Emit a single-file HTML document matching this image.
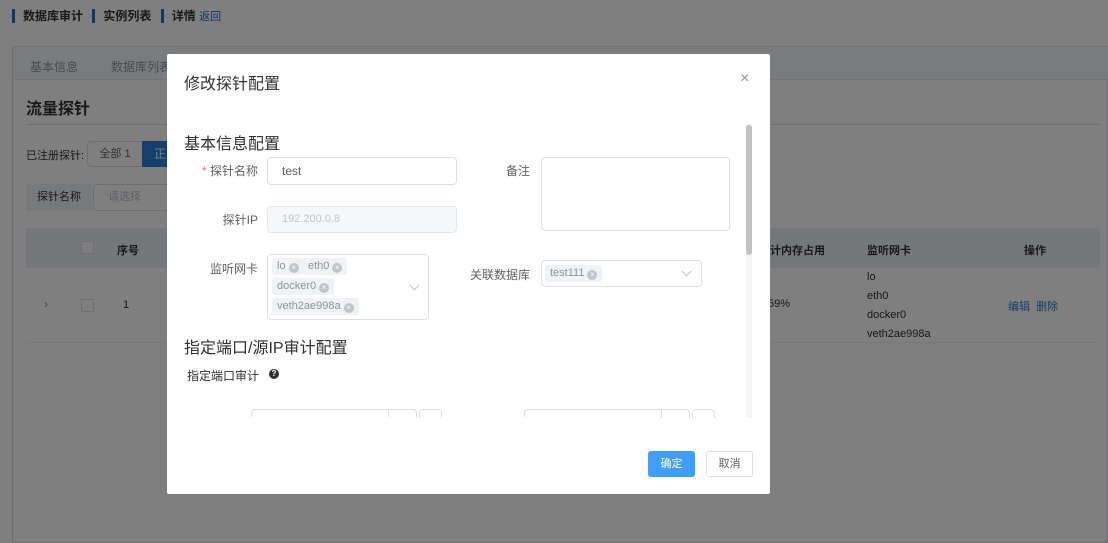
<!DOCTYPE html>
<html><head><meta charset="utf-8"><style>
*{box-sizing:border-box;margin:0;padding:0}
body{width:1108px;height:543px;overflow:hidden;background:#fff;font-family:"Liberation Sans","Noto Sans CJK SC",sans-serif;position:relative;color:#606266;font-size:12px}
.a{position:absolute}
.ov{position:absolute;left:0;top:0;width:1108px;height:543px;background:rgba(0,0,0,.5)}
.inp{position:absolute;border:1px solid #dcdfe6;border-radius:4px;background:#fff}
.tag{position:absolute;background:#f0f2f5;color:#909399;height:17px;line-height:17px;padding:0 5px;border-radius:3px;font-size:11px;white-space:nowrap}
.tag i{display:inline-block;width:10px;height:10px;border-radius:50%;background:#c0c4cc;color:#fff;font-style:normal;font-size:8px;line-height:10px;text-align:center;margin-left:3px;vertical-align:-1px}
.lab{position:absolute;font-size:12px;color:#606266;text-align:right}
.chev{position:absolute;width:7px;height:7px;border-right:1px solid #c0c4cc;border-bottom:1px solid #c0c4cc;transform:rotate(45deg)}
</style></head><body>
<div class="a" style="left:12px;top:7px;font-size:12px;font-weight:bold;color:#303133">
<span style="border-left:3px solid #1f6fd0;padding-left:8px">数据库审计</span>
<span style="border-left:3px solid #1f6fd0;padding-left:8px;margin-left:6px">实例列表</span>
<span style="border-left:3px solid #1f6fd0;padding-left:8px;margin-left:6px">详情</span>
<span style="color:#1f6fd0;font-weight:normal;font-size:11px">返回</span></div>
<div class="a" style="left:12px;top:46px;width:1096px;height:497px;border:1px solid #dcdfe6;background:#fff"></div>
<div class="a" style="left:13px;top:47px;width:1095px;height:33px;background:#f5f7fa;border-bottom:1px solid #e4e7ed"></div>
<div class="a" style="left:30px;top:58px;color:#909399">基本信息</div>
<div class="a" style="left:111px;top:58px;color:#909399">数据库列表</div>
<div class="a" style="left:26px;top:95px;font-size:16px;font-weight:bold;color:#303133">流量探针</div>
<div class="a" style="left:26px;top:124px;width:1074px;height:1px;background:#dcdfe6"></div>
<div class="a" style="left:26px;top:147px;font-size:11px;color:#303133">已注册探针:</div>
<div class="a" style="left:87px;top:141px;width:56px;height:26px;border:1px solid #dcdfe6;border-radius:4px 0 0 4px;text-align:center;line-height:24px;font-size:11px">全部 1</div>
<div class="a" style="left:142px;top:141px;width:40px;height:26px;background:#2a7fd8;color:#fff;line-height:26px;padding-left:12px">正常</div>
<div class="a" style="left:26px;top:184px;width:66px;height:27px;background:#f0f2f5;line-height:27px;text-align:center;font-size:11px;color:#303133">探针名称</div>
<div class="a" style="left:93px;top:184px;width:100px;height:27px;border:1px solid #dcdfe6;border-radius:4px;line-height:25px;padding-left:14px;color:#c0c4cc;font-size:11px">请选择</div>
<div class="a" style="left:26px;top:228px;width:1074px;height:40px;background:#ebeef5"></div>
<div class="a" style="left:26px;top:268px;width:1074px;height:75px;border-bottom:1px solid #ebeef5"></div>
<div class="a" style="left:81px;top:241px;width:13px;height:13px;border:1px solid #dcdfe6;background:#fff;border-radius:2px"></div>
<div class="a" style="left:81px;top:299px;width:13px;height:13px;border:1px solid #dcdfe6;background:#fff;border-radius:2px"></div>
<div class="a" style="left:117px;top:242px;font-weight:bold;color:#303133;font-size:11px">序号</div>
<div class="a" style="left:123px;top:299px;font-size:11px;color:#303133">1</div>
<div class="a" style="left:44px;top:297px;color:#909399">›</div>
<div class="a" style="left:770px;top:242px;font-weight:bold;color:#303133;font-size:11px">计内存占用</div>
<div class="a" style="left:867px;top:242px;font-weight:bold;color:#303133;font-size:11px">监听网卡</div>
<div class="a" style="left:1024px;top:242px;font-weight:bold;color:#303133;font-size:11px">操作</div>
<div class="a" style="left:768px;top:298px;font-size:11px;color:#303133">59%</div>
<div class="a" style="left:867px;top:268px;font-size:11px;color:#303133;line-height:19px">lo<br>eth0<br>docker0<br>veth2ae998a</div>
<div class="a" style="left:1008px;top:298px;font-size:11px;color:#2a7fd8">编辑 &nbsp;删除</div>
<div class="ov"></div>
<div class="a" style="left:167px;top:54px;width:603px;height:440px;background:#fff;border-radius:2px">
<div class="a" style="left:17px;top:16px;font-size:16px;color:#303133">修改探针配置</div>
<div class="a" style="left:573px;top:16px;font-size:16px;color:#909399">×</div>
<div class="a" style="left:579px;top:70px;width:6px;height:294px;background:#f5f5f5"></div>
<div class="a" style="left:579px;top:71px;width:6px;height:130px;background:#c1c1c1;border-radius:3px"></div>
<div class="a" style="left:17px;top:76px;font-size:16px;color:#303133">基本信息配置</div>
<div class="lab" style="left:20px;top:108px;width:71px"><span style="color:#f56c6c">* </span>探针名称</div>
<div class="inp" style="left:100px;top:103px;width:190px;height:28px;padding:6px 14px;color:#606266">test</div>
<div class="lab" style="left:300px;top:108px;width:63px">备注</div>
<div class="inp" style="left:374px;top:103px;width:189px;height:74px"></div>
<div class="lab" style="left:20px;top:157px;width:71px">探针IP</div>
<div class="inp" style="left:100px;top:152px;width:190px;height:27px;background:#f5f7fa;border-color:#e4e7ed;padding:6px 14px;color:#c0c4cc;font-size:11px">192.200.0.8</div>
<div class="lab" style="left:20px;top:206px;width:71px">监听网卡</div>
<div class="inp" style="left:100px;top:200px;width:162px;height:66px"></div>
<span class="tag" style="left:105px;top:204px">lo<i>×</i></span>
<span class="tag" style="left:136px;top:204px">eth0<i>×</i></span>
<span class="tag" style="left:105px;top:224px">docker0<i>×</i></span>
<span class="tag" style="left:105px;top:244px">veth2ae998a<i>×</i></span>
<div class="chev" style="left:244px;top:228px"></div>
<div class="lab" style="left:300px;top:212px;width:63px">关联数据库</div>
<div class="inp" style="left:374px;top:206px;width:161px;height:27px"></div>
<span class="tag" style="left:378px;top:211px">test111<i>×</i></span>
<div class="chev" style="left:516px;top:214px"></div>
<div class="a" style="left:17px;top:280px;font-size:16px;color:#303133">指定端口/源IP审计配置</div>
<div class="a" style="left:20px;top:313px;color:#303133">指定端口审计</div>
<div class="a" style="left:102px;top:315px;width:10px;height:10px;border-radius:50%;background:#303133;color:#fff;font-size:8px;line-height:10px;text-align:center;font-weight:bold">?</div>
<div class="a" style="left:0;top:350px;width:578px;height:14px;overflow:hidden">
<div class="inp" style="left:84px;top:5px;width:166px;height:28px"></div>
<div class="a" style="left:221px;top:5px;width:1px;height:20px;background:#dcdfe6"></div>
<div class="inp" style="left:252px;top:5px;width:23px;height:28px"></div>
<div class="inp" style="left:357px;top:5px;width:166px;height:28px"></div>
<div class="a" style="left:494px;top:5px;width:1px;height:20px;background:#dcdfe6"></div>
<div class="inp" style="left:525px;top:5px;width:23px;height:28px"></div>
</div>
<div class="a" style="left:481px;top:397px;width:47px;height:26px;background:#409eff;border-radius:3px;color:#fff;font-size:11px;text-align:center;line-height:26px">确定</div>
<div class="a" style="left:539px;top:397px;width:47px;height:26px;border:1px solid #dcdfe6;border-radius:3px;font-size:11px;text-align:center;line-height:24px;color:#606266">取消</div>
</div>
</body></html>
